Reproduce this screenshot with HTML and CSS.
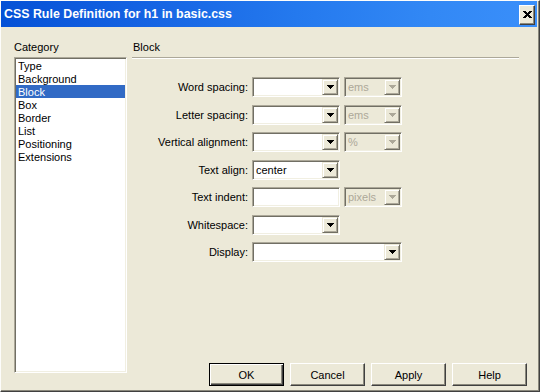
FILE: index.html
```html
<!DOCTYPE html>
<html>
<head>
<meta charset="utf-8">
<link rel="stylesheet" href="styles.css">
</head>
<body>
<div class="window">
  <div class="titlebar">
    <span class="title">CSS Rule Definition for h1 in basic.css</span>
    <button class="close" aria-label="Close">
      <svg width="9" height="7" viewBox="0 0 9 7"><path d="M0 0h3v1H0zM6 0h3v1H6zM1 1h3v1H1zM5 1h3v1H5zM2 2h5v1H2zM3 3h3v1H3zM2 4h5v1H2zM1 5h3v1H1zM5 5h3v1H5zM0 6h3v1H0zM6 6h3v1H6z" fill="#000"/></svg>
    </button>
  </div>
  <div class="content">
    <div class="category">
      <div class="heading">Category</div>
      <ul class="listbox">
        <li>Type</li>
        <li>Background</li>
        <li class="selected">Block</li>
        <li>Box</li>
        <li>Border</li>
        <li>List</li>
        <li>Positioning</li>
        <li>Extensions</li>
      </ul>
    </div>
    <div class="panel">
      <div class="heading panel-heading">Block</div>
      <div class="separator"></div>
      <div class="form">
        <label class="label">Word spacing:</label>
        <div class="controls">
          <div class="combo field"><span class="value"></span><span class="drop"><svg width="7" height="4"><path d="M0 0h7v1H0zM1 1h5v1H1zM2 2h3v1H2zM3 3h1v1H3z"/></svg></span></div>
          <div class="combo unit disabled"><span class="value">ems</span><span class="drop"><svg width="7" height="4"><path d="M0 0h7v1H0zM1 1h5v1H1zM2 2h3v1H2zM3 3h1v1H3z"/></svg></span></div>
        </div>
        <label class="label">Letter spacing:</label>
        <div class="controls">
          <div class="combo field"><span class="value"></span><span class="drop"><svg width="7" height="4"><path d="M0 0h7v1H0zM1 1h5v1H1zM2 2h3v1H2zM3 3h1v1H3z"/></svg></span></div>
          <div class="combo unit disabled"><span class="value">ems</span><span class="drop"><svg width="7" height="4"><path d="M0 0h7v1H0zM1 1h5v1H1zM2 2h3v1H2zM3 3h1v1H3z"/></svg></span></div>
        </div>
        <label class="label">Vertical alignment:</label>
        <div class="controls">
          <div class="combo field"><span class="value"></span><span class="drop"><svg width="7" height="4"><path d="M0 0h7v1H0zM1 1h5v1H1zM2 2h3v1H2zM3 3h1v1H3z"/></svg></span></div>
          <div class="combo unit disabled"><span class="value">%</span><span class="drop"><svg width="7" height="4"><path d="M0 0h7v1H0zM1 1h5v1H1zM2 2h3v1H2zM3 3h1v1H3z"/></svg></span></div>
        </div>
        <label class="label">Text align:</label>
        <div class="controls">
          <div class="combo field"><span class="value">center</span><span class="drop"><svg width="7" height="4"><path d="M0 0h7v1H0zM1 1h5v1H1zM2 2h3v1H2zM3 3h1v1H3z"/></svg></span></div>
        </div>
        <label class="label">Text indent:</label>
        <div class="controls">
          <div class="combo field text"><span class="value"></span></div>
          <div class="combo unit disabled"><span class="value">pixels</span><span class="drop"><svg width="7" height="4"><path d="M0 0h7v1H0zM1 1h5v1H1zM2 2h3v1H2zM3 3h1v1H3z"/></svg></span></div>
        </div>
        <label class="label">Whitespace:</label>
        <div class="controls">
          <div class="combo field"><span class="value"></span><span class="drop"><svg width="7" height="4"><path d="M0 0h7v1H0zM1 1h5v1H1zM2 2h3v1H2zM3 3h1v1H3z"/></svg></span></div>
        </div>
        <label class="label">Display:</label>
        <div class="controls">
          <div class="combo wide"><span class="value"></span><span class="drop"><svg width="7" height="4"><path d="M0 0h7v1H0zM1 1h5v1H1zM2 2h3v1H2zM3 3h1v1H3z"/></svg></span></div>
        </div>
      </div>
      <div class="buttons">
        <button class="btn default">OK</button>
        <button class="btn">Cancel</button>
        <button class="btn">Apply</button>
        <button class="btn">Help</button>
      </div>
    </div>
  </div>
</div>
</body>
</html>
```

FILE: styles.css
```css
html, body {
  margin: 0;
  padding: 0;
  background: #ece9d8;
}

body {
  font-family: "Liberation Sans", Arial, sans-serif;
  font-size: 11px;
  color: #000;
}

.window {
  width: 540px;
  height: 392px;
  box-sizing: border-box;
  display: flex;
  flex-direction: column;
  background: #ece9d8;
  border-style: solid;
  border-width: 1px;
  border-color: #fdfdfb #404040 #404040 #fdfdfb;
  padding: 0 2px 1px 0;
  box-shadow: inset -1px -1px 0 #8a887c;
}

.titlebar {
  height: 26px;
  flex: none;
  display: flex;
  align-items: center;
  padding-left: 3px;
  background: linear-gradient(to right, #0551d6 0%, #1462e2 25%, #2479ee 55%, #3288f5 80%, #3a8ffa 100%);
}

.title {
  flex: 1;
  color: #fff;
  font-family: "Liberation Sans", Arial, sans-serif;
  font-weight: 700;
  font-size: 12.4px;
  line-height: 16px;
  white-space: nowrap;
}

.close {
  width: 16px;
  height: 20px;
  margin: 1px 2px 0 0;
  padding: 0;
  display: flex;
  align-items: center;
  justify-content: center;
  background: #ece9d8;
  border-style: solid;
  border-width: 1px;
  border-color: #fff #404040 #404040 #fff;
  box-shadow: inset -1px -1px 0 #8a887c;
}

.close svg {
  display: block;
}

.content {
  flex: 1;
  display: flex;
  gap: 5px;
  padding: 14px 10px 4px 13px;
}

.heading {
  line-height: 13px;
  height: 13px;
  white-space: nowrap;
}

.category {
  width: 113px;
  flex: none;
}

.listbox {
  list-style: none;
  margin: 3px 0 0;
  padding: 0;
  height: 316px;
  box-sizing: border-box;
  background: #fff;
  border-style: solid;
  border-width: 1px;
  border-color: #aca899 #fff #fff #aca899;
  box-shadow: inset 1px 1px 0 #716f64, inset -1px -1px 0 #f1efe2;
  padding: 1px;
}

.listbox li {
  height: 12px;
  line-height: 13px;
  padding: 1px 0 0 2px;
  white-space: nowrap;
  overflow: hidden;
}

.listbox li.selected {
  background: #316ac5;
  color: #fff;
}

.panel {
  flex: 1;
  display: flex;
  flex-direction: column;
}

.panel-heading {
  padding-left: 1px;
}

.separator {
  margin: 3px 8px 0 0;
  height: 0;
  border-top: 1px solid #aca899;
  border-bottom: 1px solid #fff;
}

.form {
  margin-top: 18px;
  display: grid;
  grid-template-columns: 116px auto;
  column-gap: 4px;
  row-gap: 7.5px;
  align-items: center;
  justify-content: start;
}

.label {
  text-align: right;
  white-space: nowrap;
}

.controls {
  display: flex;
  gap: 4px;
}

.combo {
  height: 20px;
  box-sizing: border-box;
  display: flex;
  align-items: center;
  background: #fff;
  border-style: solid;
  border-width: 1px;
  border-color: #aca899 #fff #fff #aca899;
  box-shadow: inset 1px 1px 0 #716f64, inset -1px -1px 0 #f1efe2;
  padding: 1px;
}

.combo.field {
  width: 88px;
}

.combo.unit {
  width: 58px;
}

.combo.wide {
  width: 150px;
}

.combo .value {
  flex: 1;
  padding-left: 2px;
  line-height: 16px;
  white-space: nowrap;
  overflow: hidden;
}

.combo.disabled {
  background: #ece9d8;
  color: #aca899;
}

.drop {
  width: 16px;
  height: 16px;
  box-sizing: border-box;
  flex: none;
  display: flex;
  align-items: center;
  justify-content: center;
  background: #ece9d8;
  border-style: solid;
  border-width: 1px;
  border-color: #ece9d8 #716f64 #716f64 #ece9d8;
  box-shadow: inset 1px 1px 0 #fff, inset -1px -1px 0 #aca899;
}

.drop svg {
  fill: #000;
  display: block;
}

.combo.disabled .drop svg {
  fill: #aca899;
}

.buttons {
  margin-top: auto;
  display: flex;
  justify-content: flex-end;
  gap: 6px;
}

.btn {
  width: 75px;
  height: 23px;
  box-sizing: border-box;
  font-family: "Liberation Sans", Arial, sans-serif;
  font-size: 11px;
  color: #000;
  padding: 0;
  background: #ece9d8;
  border-style: solid;
  border-width: 1px;
  border-color: #fff #404040 #404040 #fff;
  box-shadow: inset -1px -1px 0 #8a887c;
}

.btn.default {
  border: 1px solid #000;
  box-shadow: inset 1px 1px 0 #fff, inset -1px -1px 0 #404040, inset -2px -2px 0 #8a887c;
}
```
